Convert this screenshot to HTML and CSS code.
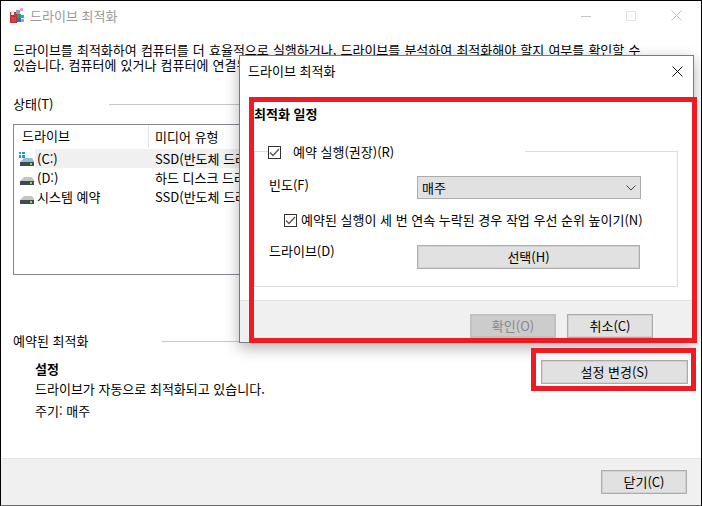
FILE: index.html
```html
<!DOCTYPE html>
<html lang="ko">
<head>
<meta charset="utf-8">
<title>드라이브 최적화</title>
<link rel="stylesheet" href="styles.css">
</head>
<body>
<div class="window">
  <header class="titlebar">
    <svg class="app-icon" width="16" height="16" viewBox="0 0 16 16">
      <rect x="0" y="4" width="7" height="11" fill="#b8323a"/>
      <rect x="1" y="3" width="3" height="4" fill="#efe4de"/>
      <rect x="4" y="5" width="2" height="3" fill="#7a5a70"/>
      <rect x="1" y="9" width="5" height="5" fill="#d84040"/>
      <rect x="6" y="2" width="4" height="4" fill="#9a9ab0"/>
      <rect x="7" y="6" width="4" height="4" fill="#3a9a50"/>
      <rect x="7" y="10" width="4" height="4" fill="#3070c0"/>
      <rect x="11" y="7" width="3" height="3" fill="#40a0c8"/>
      <rect x="11" y="11" width="3" height="3" fill="#90a8c0"/>
      <rect x="10" y="0" width="3" height="3" fill="#dca6e4"/>
    </svg>
    <span class="titlebar-text">드라이브 최적화</span>
    <div class="controls">
      <svg class="ctl" width="10" height="10" viewBox="0 0 10 10"><path d="M0 5.5H10" stroke="#c4c4c4" fill="none"/></svg>
      <svg class="ctl" width="10" height="10" viewBox="0 0 10 10"><rect x=".5" y=".5" width="9" height="9" stroke="#e0e0e0" fill="none"/></svg>
      <svg class="ctl" width="11" height="11" viewBox="0 0 11 11"><path d="M.5 .5L10.500 10.500M10.500 .5L.5 10.500" stroke="#c0c0c0" fill="none"/></svg>
    </div>
  </header>

  <main class="content">
    <p class="desc">드라이브를 최적화하여 컴퓨터를 더 효율적으로 실행하거나, 드라이브를 분석하여 최적화해야 할지 여부를 확인할 수<br>있습니다. 컴퓨터에 있거나 컴퓨터에 연결된 드라이브만 여기에 표시됩니다.</p>

    <div class="section-head status-head">
      <span>상태(T)</span>
      <i class="rule"></i>
    </div>

    <div class="list">
      <div class="list-head">
        <span class="col-a">드라이브</span>
        <span class="col-b">미디어 유형</span>
      </div>
      <div class="row">
        <span class="row-icon">
          <svg width="16" height="14" viewBox="0 0 16 14">
            <rect x="0" y="0" width="2" height="2" fill="#1e9be0"/><rect x="3" y="0" width="3" height="2" fill="#1e9be0"/>
            <rect x="0" y="3" width="2" height="3" fill="#1e9be0"/><rect x="3" y="3" width="3" height="3" fill="#1e9be0"/>
            <path d="M3 8L5 6H13L15 9V10H1Z" fill="#8fc0d8"/>
            <rect x="1" y="10" width="14" height="4" fill="#44484c"/>
            <rect x="11" y="11" width="2" height="2" fill="#7fe05a"/>
          </svg>
        </span>
        <span class="col-a sel">(C:)</span>
        <span class="col-b sel">SSD(반도체 드라이브)</span>
      </div>
      <div class="row">
        <span class="row-icon">
          <svg width="16" height="14" viewBox="0 0 16 14">
            <path d="M3 8L5 6H13L15 9V10H1Z" fill="#c4c4c4"/>
            <rect x="1" y="10" width="14" height="4" fill="#44484c"/>
            <rect x="11" y="11" width="2" height="2" fill="#7fe05a"/>
          </svg>
        </span>
        <span class="col-a">(D:)</span>
        <span class="col-b">하드 디스크 드라이브</span>
      </div>
      <div class="row">
        <span class="row-icon">
          <svg width="16" height="14" viewBox="0 0 16 14">
            <path d="M3 8L5 6H13L15 9V10H1Z" fill="#c4c4c4"/>
            <rect x="1" y="10" width="14" height="4" fill="#44484c"/>
            <rect x="11" y="11" width="2" height="2" fill="#7fe05a"/>
          </svg>
        </span>
        <span class="col-a">시스템 예약</span>
        <span class="col-b">SSD(반도체 드라이브)</span>
      </div>
    </div>

    <div class="section-head sched-head">
      <span>예약된 최적화</span>
      <i class="rule"></i>
    </div>

    <div class="sched">
      <div class="sched-info">
        <strong class="sched-title">설정</strong>
        <span class="sched-line">드라이브가 자동으로 최적화되고 있습니다.</span>
        <span class="sched-line">주기: 매주</span>
      </div>
      <button class="btn btn-settings">설정 변경(S)</button>
    </div>
  </main>

  <footer class="footer">
    <button class="btn btn-std">닫기(C)</button>
  </footer>
</div>

<section class="dialog">
  <header class="dlg-title">
    <span>드라이브 최적화</span>
    <svg width="11" height="11" viewBox="0 0 11 11"><path d="M.5 .5L10.500 10.500M10.500 .5L.5 10.500" stroke="#111" fill="none"/></svg>
  </header>
  <div class="dlg-body">
    <strong class="dlg-heading">최적화 일정</strong>
    <div class="group">
      <div class="legend">
        <span class="check"><svg width="11" height="9" viewBox="0 0 11 9"><path d="M1 4.500L4 7.500L10 1" stroke="#555" stroke-width="1.300" fill="none"/></svg></span>
        <span>예약 실행(권장)(R)</span>
      </div>
      <div class="field freq">
        <span class="field-label">빈도(F)</span>
        <div class="combo">
          <span>매주</span>
          <svg width="10" height="6" viewBox="0 0 10 6"><path d="M.5 .5L5 5L9.500 .5" stroke="#444" fill="none"/></svg>
        </div>
      </div>
      <div class="priority">
        <span class="check"><svg width="11" height="9" viewBox="0 0 11 9"><path d="M1 4.500L4 7.500L10 1" stroke="#555" stroke-width="1.300" fill="none"/></svg></span>
        <span>예약된 실행이 세 번 연속 누락된 경우 작업 우선 순위 높이기(N)</span>
      </div>
      <div class="field drive">
        <span class="field-label">드라이브(D)</span>
        <button class="btn btn-select">선택(H)</button>
      </div>
    </div>
  </div>
  <footer class="dlg-footer">
    <button class="btn btn-std btn-disabled">확인(O)</button>
    <button class="btn btn-std">취소(C)</button>
  </footer>
</section>

<div class="mark mark-dialog"></div>
<div class="mark mark-button"></div>
</body>
</html>
```
FILE: styles.css
```css
* { box-sizing: border-box; }
html, body { margin: 0; padding: 0; }
body {
  width: 702px;
  height: 506px;
  overflow: hidden;
  position: relative;
  background: #fff;
  color: #000;
  font: 13px/16px "Noto Sans CJK KR", "Noto Sans", sans-serif;
}
.window {
  width: 702px;
  height: 506px;
  display: flex;
  flex-direction: column;
  border: 1px solid #000;
  border-bottom-color: #6a6a6a;
}
.titlebar {
  height: 29px;
  flex: none;
  display: flex;
  align-items: center;
  padding-left: 9px;
  color: #999;
}
.app-icon { margin-top: 1px; }
.titlebar-text { margin-left: 4px; }
.controls {
  margin-left: auto;
  display: flex;
  align-items: center;
  gap: 35px;
  padding-right: 19px;
}
.controls .ctl { display: block; }

.content {
  flex: 1;
  display: flex;
  flex-direction: column;
  padding: 12px 13px 0 12px;
  min-height: 0;
}
.desc { margin: 0; line-height: 15px; white-space: nowrap; word-spacing: .5px; }
.section-head {
  display: flex;
  align-items: center;
  gap: 0;
}
.section-head .rule { flex: 1; height: 1px; background: #c8c8c8; }
.status-head { margin-top: 24px; }
.status-head span { width: 96px; }
.sched-head { margin-top: 58px; }
.sched-head span { width: 149px; }

.list {
  margin-top: 12px;
  height: 151px;
  width: 500px;
  border: 1px solid #828790;
  background: #fff;
  white-space: nowrap;
}
.list-head { display: flex; height: 23px; align-items: center; padding-left: 8px; margin-bottom: 1px; }
.list-head .col-a { width: 127px; flex: none; height: 100%; line-height: 21px; border-right: 1px solid #e5e5e5; }
.list-head .col-b { padding-left: 6px; }
.row { display: flex; align-items: center; height: 19px; }
.row-icon { width: 21px; padding-left: 5px; height: 14px; flex: none; }
.row-icon svg { display: block; }
.row .col-a { width: 113px; flex: none; padding-left: 2px; height: 19px; line-height: 19px; }
.row .col-b { flex: 1; padding-left: 7px; height: 19px; line-height: 19px; }
.row .sel { background: #f0f0f0; }

.sched { display: flex; align-items: flex-start; padding: 11px 0 0 22px; justify-content: space-between; }
.sched-info { display: flex; flex-direction: column; }
.sched-title { font-weight: 700; line-height: 18px; }
.sched-line { line-height: 22px; }
.btn {
  font: inherit;
  color: #000;
  background: #e1e1e1;
  border: 1px solid #adadad;
  box-shadow: inset 0 0 0 1px rgba(173,173,173,.3);
  padding: 0;
  display: block;
  text-align: center;
}
.btn-settings { width: 147px; height: 24px; }
.btn-std { width: 86px; height: 24px; }
.btn-disabled { background: #ccc; color: #888; border-color: #bfbfbf; }

.footer {
  height: 47px;
  flex: none;
  background: #f0f0f0;
  border-top: 1px solid #e3e3e3;
  display: flex;
  justify-content: flex-end;
  align-items: flex-start;
  padding: 11px 14px 0 0;
}

.dialog {
  position: absolute;
  left: 239px;
  top: 55px;
  width: 455px;
  height: 288px;
  background: #fff;
  border: 1px solid #7a7a7a;
  box-shadow: 0 5px 14px rgba(0,0,0,.3);
  display: flex;
  flex-direction: column;
}
.dlg-title {
  height: 30px;
  flex: none;
  display: flex;
  align-items: center;
  justify-content: space-between;
  padding: 0 10px 0 8px;
}
.dlg-body { flex: 1; padding: 20px 15px 0 14px; min-height: 0; }
.dlg-heading { display: block; font-weight: 700; line-height: 16px; }
.group {
  margin-top: 29px;
  height: 136px;
  border: 1px solid #dcdcdc;
  position: relative;
  padding: 0 36px 0 14px;
}
.legend {
  margin: -8px 0 0 -1px;
  width: 257px;
  height: 16px;
  background: #fff;
  display: flex;
  align-items: center;
  gap: 12px;
}
.check {
  width: 13px;
  height: 13px;
  border: 1px solid #333;
  background: #fff;
  display: flex;
  align-items: center;
  justify-content: center;
  flex: none;
}
.field { display: flex; align-items: center; }
.field-label { width: 148px; flex: none; }
.freq { margin-top: 16px; }
.freq .field-label { margin-top: -6px; }
.combo {
  width: 224px;
  height: 23px;
  background: #e1e1e1;
  border: 1px solid #adadad;
  display: flex;
  align-items: center;
  justify-content: space-between;
  padding: 0 4px;
}
.priority {
  margin-top: 13px;
  margin-left: 15px;
  display: flex;
  align-items: center;
  gap: 4px;
  white-space: nowrap;
}
.drive { margin-top: 17px; }
.btn-select { width: 223px; height: 24px; }
.drive .field-label { margin-top: -12px; }
.dlg-footer {
  height: 42px;
  flex: none;
  background: #f0f0f0;
  border-top: 1px solid #e3e3e3;
  display: flex;
  justify-content: flex-end;
  gap: 11px;
  padding: 13px 40px 0 0;
}

.mark { position: absolute; border: 5px solid #ed1c24; pointer-events: none; }
.mark-dialog { left: 249px; top: 97px; width: 448px; height: 246px; }
.mark-button { left: 531px; top: 348px; width: 165px; height: 43px; }
```
